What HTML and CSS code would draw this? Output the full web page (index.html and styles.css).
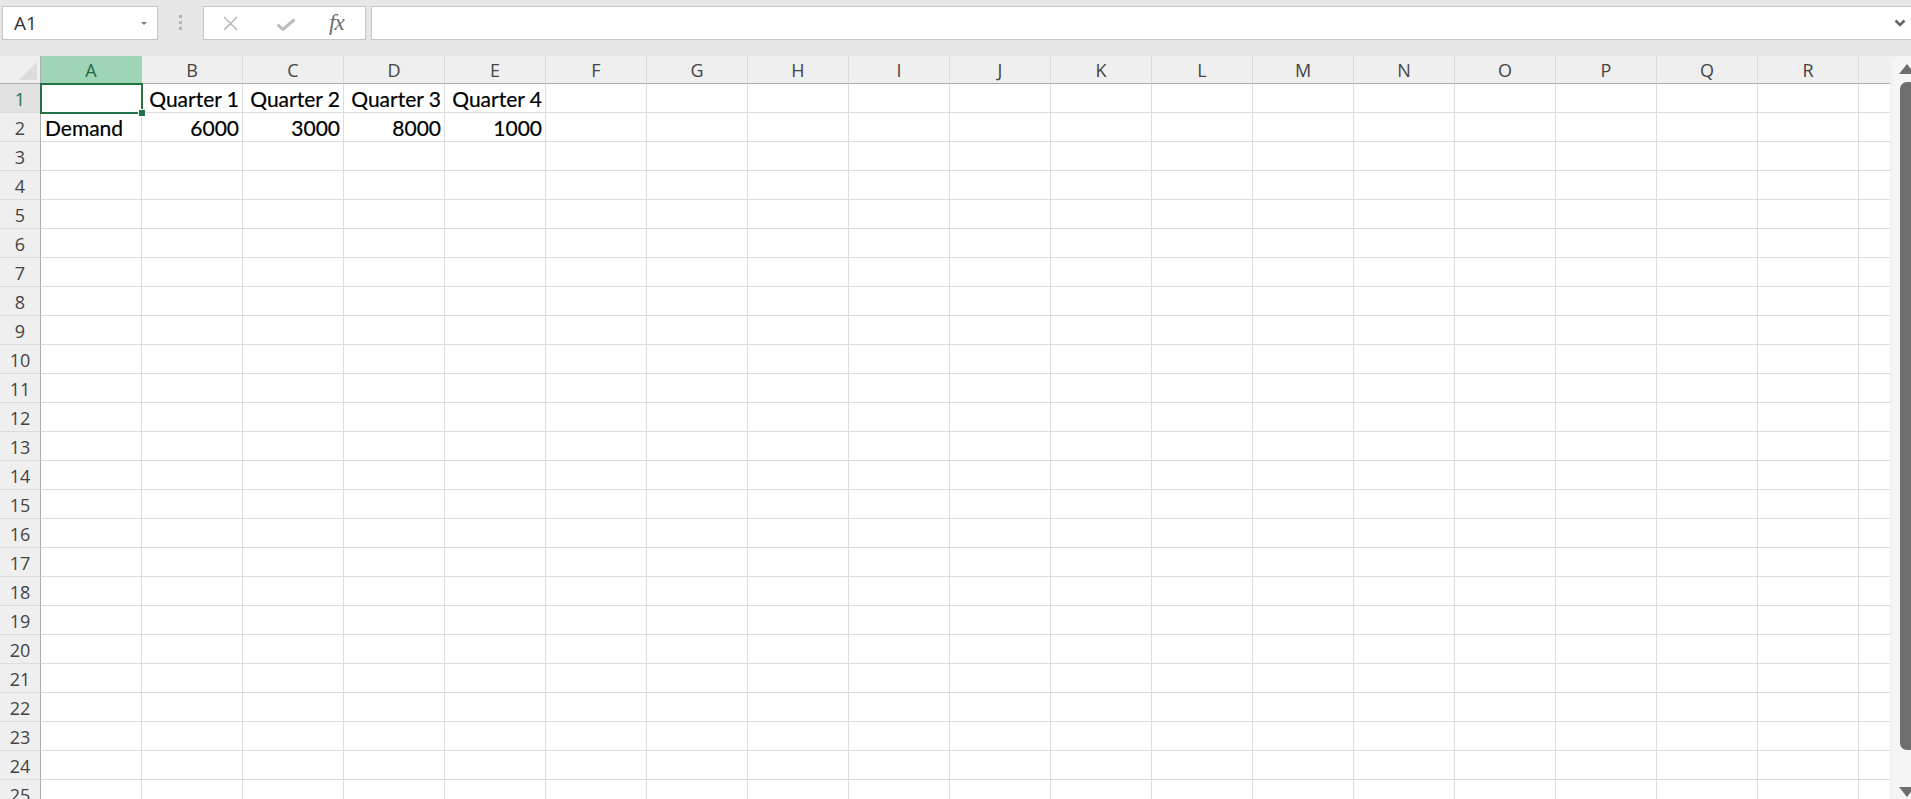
FILE: index.html
```html
<!DOCTYPE html>
<html>
<head>
<meta charset="utf-8">
<title>Sheet</title>
<link rel="stylesheet" href="styles.css">
</head>
<body>
<div class="toolbar">
  <div class="namebox"><span class="ref">A1</span><span class="caret"></span></div>
  <div class="grip"><i></i><i></i><i></i></div>
  <div class="fbtns">
    <svg class="ico-x" width="17" height="15" viewBox="0 0 17 15"><path d="M2 1 L15 14 M15 1 L2 14" stroke="#b9b9b9" stroke-width="1.6" fill="none"/></svg>
    <svg class="ico-ok" width="20" height="13" viewBox="0 0 20 13"><path d="M1.5 6.5 L7 11.5 L18.5 1.5" stroke="#bdbdbd" stroke-width="3" fill="none"/></svg>
    <span class="fx">fx</span>
  </div>
  <div class="fbar">
    <svg class="ico-chev" width="12" height="8" viewBox="0 0 12 8"><path d="M1.5 1.5 L6 6 L10.5 1.5" stroke="#666" stroke-width="2.6" fill="none"/></svg>
  </div>
</div>
<div class="sheet">
  <div class="gridwrap">
    <table class="grid">
      <thead>
        <tr>
          <th class="corner"><span class="tri"></span></th>
          <th class="col active">A</th><th class="col">B</th><th class="col">C</th><th class="col">D</th><th class="col">E</th><th class="col">F</th><th class="col">G</th><th class="col">H</th><th class="col">I</th><th class="col">J</th><th class="col">K</th><th class="col">L</th><th class="col">M</th><th class="col">N</th><th class="col">O</th><th class="col">P</th><th class="col">Q</th><th class="col">R</th><th class="col last"></th>
        </tr>
      </thead>
      <tbody>
        <tr><th class="row active">1</th><td class="sel"><span class="handle"></span></td><td class="r">Quarter 1</td><td class="r">Quarter 2</td><td class="r">Quarter 3</td><td class="r">Quarter 4</td><td></td><td></td><td></td><td></td><td></td><td></td><td></td><td></td><td></td><td></td><td></td><td></td><td></td><td class="last"></td></tr>
        <tr><th class="row">2</th><td>Demand</td><td class="r">6000</td><td class="r">3000</td><td class="r">8000</td><td class="r">1000</td><td></td><td></td><td></td><td></td><td></td><td></td><td></td><td></td><td></td><td></td><td></td><td></td><td></td><td class="last"></td></tr>
        <tr><th class="row">3</th><td></td><td></td><td></td><td></td><td></td><td></td><td></td><td></td><td></td><td></td><td></td><td></td><td></td><td></td><td></td><td></td><td></td><td></td><td class="last"></td></tr>
        <tr><th class="row">4</th><td></td><td></td><td></td><td></td><td></td><td></td><td></td><td></td><td></td><td></td><td></td><td></td><td></td><td></td><td></td><td></td><td></td><td></td><td class="last"></td></tr>
        <tr><th class="row">5</th><td></td><td></td><td></td><td></td><td></td><td></td><td></td><td></td><td></td><td></td><td></td><td></td><td></td><td></td><td></td><td></td><td></td><td></td><td class="last"></td></tr>
        <tr><th class="row">6</th><td></td><td></td><td></td><td></td><td></td><td></td><td></td><td></td><td></td><td></td><td></td><td></td><td></td><td></td><td></td><td></td><td></td><td></td><td class="last"></td></tr>
        <tr><th class="row">7</th><td></td><td></td><td></td><td></td><td></td><td></td><td></td><td></td><td></td><td></td><td></td><td></td><td></td><td></td><td></td><td></td><td></td><td></td><td class="last"></td></tr>
        <tr><th class="row">8</th><td></td><td></td><td></td><td></td><td></td><td></td><td></td><td></td><td></td><td></td><td></td><td></td><td></td><td></td><td></td><td></td><td></td><td></td><td class="last"></td></tr>
        <tr><th class="row">9</th><td></td><td></td><td></td><td></td><td></td><td></td><td></td><td></td><td></td><td></td><td></td><td></td><td></td><td></td><td></td><td></td><td></td><td></td><td class="last"></td></tr>
        <tr><th class="row">10</th><td></td><td></td><td></td><td></td><td></td><td></td><td></td><td></td><td></td><td></td><td></td><td></td><td></td><td></td><td></td><td></td><td></td><td></td><td class="last"></td></tr>
        <tr><th class="row">11</th><td></td><td></td><td></td><td></td><td></td><td></td><td></td><td></td><td></td><td></td><td></td><td></td><td></td><td></td><td></td><td></td><td></td><td></td><td class="last"></td></tr>
        <tr><th class="row">12</th><td></td><td></td><td></td><td></td><td></td><td></td><td></td><td></td><td></td><td></td><td></td><td></td><td></td><td></td><td></td><td></td><td></td><td></td><td class="last"></td></tr>
        <tr><th class="row">13</th><td></td><td></td><td></td><td></td><td></td><td></td><td></td><td></td><td></td><td></td><td></td><td></td><td></td><td></td><td></td><td></td><td></td><td></td><td class="last"></td></tr>
        <tr><th class="row">14</th><td></td><td></td><td></td><td></td><td></td><td></td><td></td><td></td><td></td><td></td><td></td><td></td><td></td><td></td><td></td><td></td><td></td><td></td><td class="last"></td></tr>
        <tr><th class="row">15</th><td></td><td></td><td></td><td></td><td></td><td></td><td></td><td></td><td></td><td></td><td></td><td></td><td></td><td></td><td></td><td></td><td></td><td></td><td class="last"></td></tr>
        <tr><th class="row">16</th><td></td><td></td><td></td><td></td><td></td><td></td><td></td><td></td><td></td><td></td><td></td><td></td><td></td><td></td><td></td><td></td><td></td><td></td><td class="last"></td></tr>
        <tr><th class="row">17</th><td></td><td></td><td></td><td></td><td></td><td></td><td></td><td></td><td></td><td></td><td></td><td></td><td></td><td></td><td></td><td></td><td></td><td></td><td class="last"></td></tr>
        <tr><th class="row">18</th><td></td><td></td><td></td><td></td><td></td><td></td><td></td><td></td><td></td><td></td><td></td><td></td><td></td><td></td><td></td><td></td><td></td><td></td><td class="last"></td></tr>
        <tr><th class="row">19</th><td></td><td></td><td></td><td></td><td></td><td></td><td></td><td></td><td></td><td></td><td></td><td></td><td></td><td></td><td></td><td></td><td></td><td></td><td class="last"></td></tr>
        <tr><th class="row">20</th><td></td><td></td><td></td><td></td><td></td><td></td><td></td><td></td><td></td><td></td><td></td><td></td><td></td><td></td><td></td><td></td><td></td><td></td><td class="last"></td></tr>
        <tr><th class="row">21</th><td></td><td></td><td></td><td></td><td></td><td></td><td></td><td></td><td></td><td></td><td></td><td></td><td></td><td></td><td></td><td></td><td></td><td></td><td class="last"></td></tr>
        <tr><th class="row">22</th><td></td><td></td><td></td><td></td><td></td><td></td><td></td><td></td><td></td><td></td><td></td><td></td><td></td><td></td><td></td><td></td><td></td><td></td><td class="last"></td></tr>
        <tr><th class="row">23</th><td></td><td></td><td></td><td></td><td></td><td></td><td></td><td></td><td></td><td></td><td></td><td></td><td></td><td></td><td></td><td></td><td></td><td></td><td class="last"></td></tr>
        <tr><th class="row">24</th><td></td><td></td><td></td><td></td><td></td><td></td><td></td><td></td><td></td><td></td><td></td><td></td><td></td><td></td><td></td><td></td><td></td><td></td><td class="last"></td></tr>
        <tr><th class="row">25</th><td></td><td></td><td></td><td></td><td></td><td></td><td></td><td></td><td></td><td></td><td></td><td></td><td></td><td></td><td></td><td></td><td></td><td></td><td class="last"></td></tr>
      </tbody>
    </table>
  </div>
  <div class="vscroll">
    <span class="arrow up"></span>
    <span class="thumb"></span>
    <span class="arrow down"></span>
  </div>
</div>
</body>
</html>
```
FILE: styles.css
```css
* { box-sizing: border-box; }
html, body {
  margin: 0;
  padding: 0;
  width: 1911px;
  height: 799px;
  overflow: hidden;
  background: #e6e6e6;
  font-family: "Open Sans", "Noto Sans", sans-serif;
}

/* ---------- formula toolbar ---------- */
.toolbar {
  height: 56px;
  display: flex;
  align-items: flex-start;
  padding: 6px 0 0 2px;
  background: #e6e6e6;
}
.namebox {
  width: 156px;
  height: 34px;
  background: #fff;
  border: 1px solid #c6c6c6;
  display: flex;
  align-items: center;
  justify-content: space-between;
  padding: 0 10px 0 11px;
}
.namebox .ref {
  font-size: 19px;
  color: #333;
  line-height: 1;
}
.namebox .caret {
  width: 0;
  height: 0;
  border-left: 3.5px solid transparent;
  border-right: 3.5px solid transparent;
  border-top: 3.5px solid #7a7a7a;
  margin-top: 1px;
}
.grip {
  margin: 9px 0 0 21px;
  width: 3px;
  display: flex;
  flex-direction: column;
  gap: 3px;
}
.grip i {
  display: block;
  width: 3px;
  height: 3px;
  background: #b3b3b3;
}
.fbtns {
  margin-left: 21px;
  width: 163px;
  height: 34px;
  background: #fff;
  border: 1px solid #c6c6c6;
  display: flex;
  align-items: center;
  padding-left: 18px;
}
.ico-x { margin-top: 1px; }
.ico-ok { margin-left: 37px; margin-top: 3px; }
.fx {
  margin-left: 33px;
  font-family: "Liberation Serif", "DejaVu Serif", serif;
  font-style: italic;
  font-size: 23px;
  color: #6e6e6e;
  line-height: 1;
  margin-top: -2px;
  letter-spacing: -1px;
}
.fbar {
  margin-left: 5px;
  flex: 1;
  height: 34px;
  background: #fff;
  border: 1px solid #c6c6c6;
  border-right: none;
  display: flex;
  align-items: center;
  justify-content: flex-end;
  padding-right: 5px;
}

/* ---------- sheet ---------- */
.sheet {
  display: flex;
  height: 743px;
  background: #f0f0f0;
}
.gridwrap {
  width: 1890px;
  height: 743px;
  overflow: hidden;
  background: #fff;
}
.grid {
  border-collapse: separate;
  border-spacing: 0;
  table-layout: fixed;
  width: 1890px;
}
.grid th, .grid td {
  box-sizing: content-box;
  padding: 0;
}
.grid thead th {
  height: 27px;
  background: #efefef;
  border-bottom: 1px solid #ababab;
  font-weight: normal;
  font-size: 18px;
  color: #444;
  text-align: center;
  vertical-align: bottom;
  line-height: 25px;
}
.grid th.corner {
  width: 40px;
  border-right: 1px solid #ababab;
  position: relative;
}
.corner .tri {
  position: absolute;
  right: 3px;
  bottom: 3px;
  width: 0;
  height: 0;
  border-left: 18px solid transparent;
  border-bottom: 18px solid #dcdcdc;
}
.grid th.col {
  width: 100px;
  border-right: 1px solid #d9d9d9;
}
.grid th.col.active {
  background: #9fd5b7;
  color: #1e6b41;
  border-right-color: #9fd5b7;
  border-bottom: 1px solid #217346;
}
.grid th.last, .grid td.last {
  width: 31px;
  border-right: 1px solid #a6a6a6;
}
.grid th.row {
  width: 40px;
  height: 28px;
  background: #efefef;
  border-right: 1px solid #ababab;
  border-bottom: 1px solid #dcdcdc;
  font-weight: normal;
  font-size: 18px;
  color: #444;
  text-align: center;
  vertical-align: bottom;
  line-height: 26px;
}
.grid th.row.active {
  background: #e1e1e1;
  color: #217346;
  border-right-color: #217346;
}
.grid td {
  width: 100px;
  height: 28px;
  border-right: 1px solid #dcdcdc;
  border-bottom: 1px solid #dcdcdc;
  font-family: Lato, "Liberation Sans", sans-serif;
  font-size: 21px;
  color: #000;
  -webkit-text-stroke: 0.2px #000;
  white-space: nowrap;
  overflow: visible;
  vertical-align: bottom;
  line-height: 26px;
  padding: 0 3px 0 4px;
  box-sizing: content-box;
}
.grid td:not(.last) { width: 93px; }
.grid td.r { text-align: right; }
.grid td.sel { position: relative; }
.grid td.sel::after {
  content: "";
  position: absolute;
  left: -1px;
  top: -1px;
  right: -2px;
  bottom: -2px;
  border: 2px solid #217346;
}
.handle {
  position: absolute;
  right: -5px;
  bottom: -5px;
  width: 8px;
  height: 8px;
  background: #217346;
  border: 1px solid #fff;
  z-index: 2;
}

/* ---------- vertical scrollbar ---------- */
.vscroll {
  flex: 1;
  margin-left: 2px;
  background: #f5f5f5;
  border-top-left-radius: 9px;
  display: flex;
  flex-direction: column;
  align-items: flex-start;
  padding-left: 7px;
  overflow: hidden;
}
.arrow {
  display: block;
  width: 0;
  height: 0;
  border-left: 8px solid transparent;
  border-right: 8px solid transparent;
}
.arrow.up {
  margin-top: 8px;
  border-bottom: 10px solid #6e6e6e;
}
.thumb {
  display: block;
  margin-top: 8px;
  margin-left: 1px;
  width: 16px;
  height: 668px;
  border-radius: 7px;
  background: #6e6e6e;
}
.arrow.down {
  margin-top: 37px;
  border-top: 10px solid #6e6e6e;
}
```
